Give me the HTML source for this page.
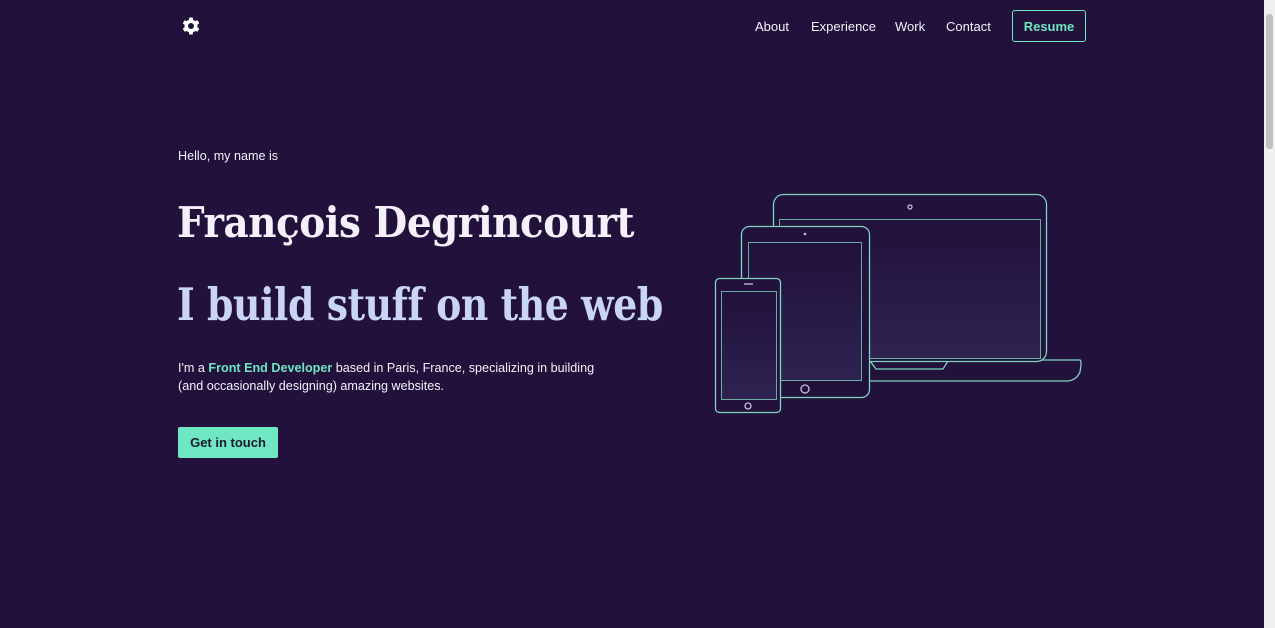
<!DOCTYPE html>
<html><head><style>
html,body{margin:0;padding:0}
body{width:1275px;height:628px;background:#21113b;overflow:hidden;position:relative;font-family:"Liberation Sans",sans-serif;color:#f4f1fa}
.sb{position:absolute;right:0;top:0;width:11px;height:628px;background:#f0f0f0}
.sb div{position:absolute;left:2px;top:14px;width:7px;height:135px;background:#c1c1c1;border-radius:3px}
nav a{position:absolute;top:19px;font-size:13px;color:#f4f1fa;text-decoration:none}
.resume{position:absolute;left:1012px;top:10px;width:72px;height:30px;border:1.5px solid #6fe7c2;border-radius:3px;color:#6fe7c2;font-weight:bold;font-size:13px;text-align:center;line-height:32px;box-sizing:content-box}
h1,h2{position:absolute;margin:0;font-family:"DejaVu Serif","Liberation Serif",serif;font-weight:bold;letter-spacing:-0.5px;white-space:nowrap;transform-origin:0 50%}
.p{position:absolute;left:178px;top:359px;font-size:12.6px;line-height:18px}
.btn{position:absolute;left:178px;top:427px;width:100px;height:31px;background:#6fe7c2;border-radius:2px;color:#1a1a2e;font-weight:bold;font-size:13px;text-align:center;line-height:32px}
</style></head><body>
<svg style="position:absolute;left:182px;top:17px" width="18" height="18" viewBox="0 0 18 18"><g fill="#fff"><circle cx="9" cy="9" r="6.5"/><rect x="7" y="0.5" width="4" height="17" rx="1"/><rect x="7" y="0.5" width="4" height="17" rx="1" transform="rotate(60 9 9)"/><rect x="7" y="0.5" width="4" height="17" rx="1" transform="rotate(120 9 9)"/></g><circle cx="9" cy="9" r="3" fill="#21113b"/></svg>
<nav><a style="left:755px">About</a><a style="left:811px">Experience</a><a style="left:895px">Work</a><a style="left:946px">Contact</a></nav>
<div class="resume">Resume</div>
<div style="position:absolute;left:178px;top:149px;font-size:12.6px">Hello, my name is</div>
<h1 style="left:177px;top:198px;font-size:42px;color:#f4f1fa;transform:scaleX(0.926)">François Degrincourt</h1>
<h2 style="left:177px;top:278px;font-size:45px;color:#c9d4f6;transform:scaleX(0.84)">I build stuff on the web</h2>
<div class="p">I'm a <b style="color:#6fe7c2">Front End Developer</b> based in Paris, France, specializing in building<br>(and occasionally designing) amazing websites.</div>
<div class="btn">Get in touch</div>
<svg style="position:absolute;left:0;top:0" width="1275" height="628">
<defs><linearGradient id="g" x1="0" y1="0" x2="0" y2="1"><stop offset="0" stop-color="#21113b"/><stop offset="1" stop-color="#2e2350"/></linearGradient></defs>
<g fill="none" stroke="#7ed4c0" stroke-width="1.3">
<path d="M870 360 H1080 Q1082 360 1080 372 Q1076 381 1066 381 H870" fill="#21113b"/>
<path d="M870 361 L876 369 H943 L948 361"/>
<rect x="773.5" y="194.5" width="273" height="167" rx="10" fill="#21113b"/>
<rect x="779.5" y="219.5" width="261" height="139" fill="url(#g)" stroke-width="0.8"/>
<circle cx="910" cy="207" r="2" stroke="#c9c0e0"/>
<rect x="741.5" y="226.5" width="128" height="171" rx="8" fill="#21113b"/>
<rect x="748.5" y="242.5" width="113" height="138" fill="url(#g)" stroke-width="0.8"/>
<circle cx="805" cy="234" r="1.3" fill="#c9c0e0" stroke="none"/>
<circle cx="805" cy="389" r="4" stroke="#c9c0e0"/>
<rect x="715.5" y="278.5" width="65" height="134" rx="4" fill="#21113b"/>
<rect x="721.5" y="291.5" width="55" height="108" fill="url(#g)" stroke-width="0.8"/>
<path d="M744 284 H753" stroke="#c9c0e0"/>
<circle cx="748" cy="406" r="3" stroke="#c9c0e0"/>
</g></svg>
<div class="sb"><div></div></div>
</body></html>
